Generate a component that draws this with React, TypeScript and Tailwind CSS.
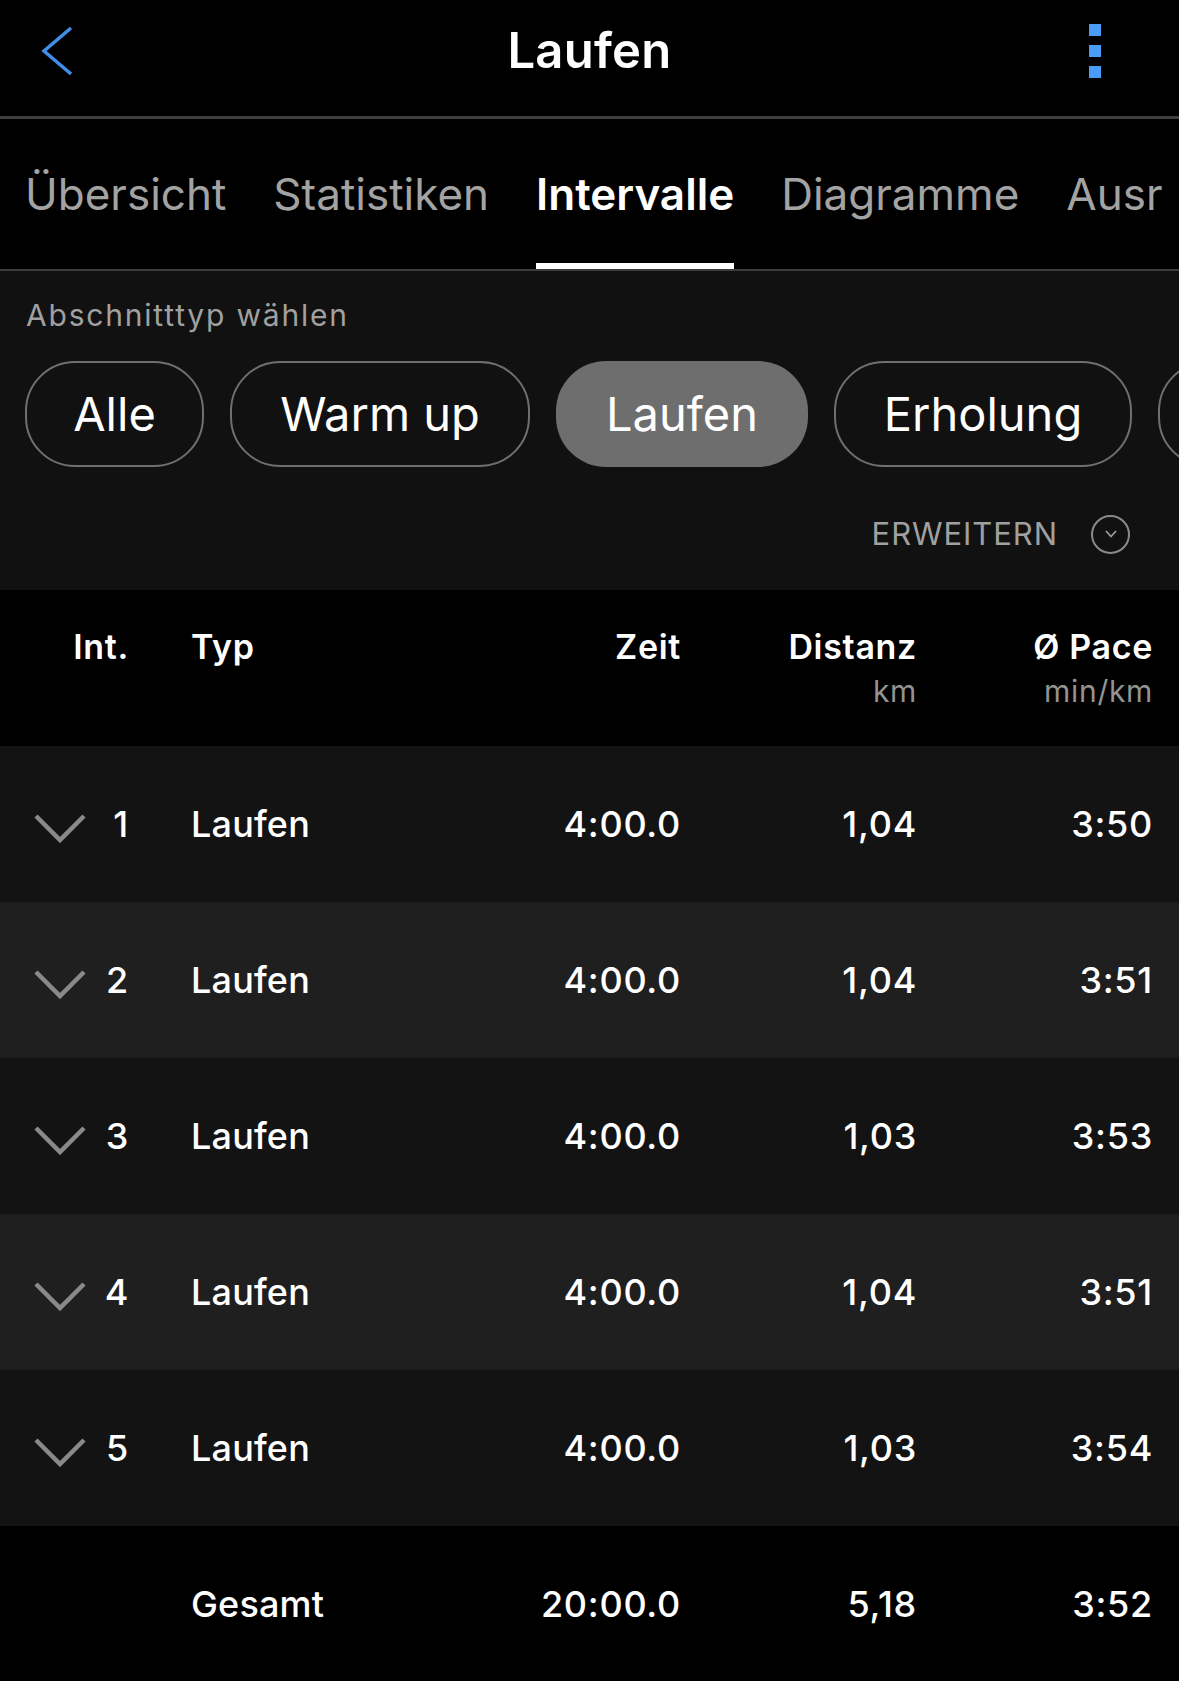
import React from 'react';

const tabs = [
  { label: 'Übersicht', active: false },
  { label: 'Statistiken', active: false },
  { label: 'Intervalle', active: true },
  { label: 'Diagramme', active: false },
  { label: 'Ausrüstung', active: false },
];

const chips = [
  { label: 'Alle', width: 'w-[179px]', active: false },
  { label: 'Warm up', width: 'w-[300px]', active: false },
  { label: 'Laufen', width: 'w-[252px]', active: true },
  { label: 'Erholung', width: 'w-[298px]', active: false },
  { label: 'Cool down', width: 'w-[290px]', active: false },
];

const laps = [
  { n: 1, type: 'Laufen', time: '4:00.0', dist: '1,04', pace: '3:50' },
  { n: 2, type: 'Laufen', time: '4:00.0', dist: '1,04', pace: '3:51' },
  { n: 3, type: 'Laufen', time: '4:00.0', dist: '1,03', pace: '3:53' },
  { n: 4, type: 'Laufen', time: '4:00.0', dist: '1,04', pace: '3:51' },
  { n: 5, type: 'Laufen', time: '4:00.0', dist: '1,03', pace: '3:54' },
];

function RowChevron() {
  return (
    <svg width="54" height="32" viewBox="0 0 54 32" fill="none">
      <path d="M3 4 L27 28 L51 4" stroke="#8a8a8a" strokeWidth="4.5" strokeLinecap="butt" strokeLinejoin="miter" />
    </svg>
  );
}

function TableRow({ lap, shade }: { lap: (typeof laps)[number]; shade: string }) {
  return (
    <div className={`flex h-[156px] items-center pr-[26px] text-[36px] font-medium tracking-[0.02em] text-white ${shade}`}>
      <div className="flex w-[129px] items-center justify-between pl-[33px]">
        <span className="mt-[8px]">
          <RowChevron />
        </span>
        <span>{lap.n}</span>
      </div>
      <div className="ml-[62px] flex-1 tracking-[0.005em]">{lap.type}</div>
      <div className="w-[200px] text-right">{lap.time}</div>
      <div className="w-[236px] text-right">{lap.dist}</div>
      <div className="w-[236px] text-right">{lap.pace}</div>
    </div>
  );
}

export default function App() {
  return (
    <div className="min-h-[1681px] w-[1179px] overflow-hidden bg-black font-[Inter,'Liberation_Sans',sans-serif] text-white">
      {/* top bar */}
      <div className="grid h-[119px] grid-cols-[1fr_auto_1fr] items-center border-b-[3px] border-[#3f3f3f] pb-[14px]">
        <div className="pl-[41px]">
          <svg width="34" height="50" viewBox="0 0 34 50" fill="none">
            <path d="M30 2 L3 25 L30 48" stroke="#3f8fea" strokeWidth="3.5" strokeLinejoin="miter" />
          </svg>
        </div>
        <div className="text-[49px] font-semibold tracking-[0.005em]">Laufen</div>
        <div className="flex justify-end pr-[78px]">
          <div className="flex flex-col gap-[9px]">
            <span className="h-[12px] w-[12px] bg-[#4a9df5]" />
            <span className="h-[12px] w-[12px] bg-[#4a9df5]" />
            <span className="h-[12px] w-[12px] bg-[#4a9df5]" />
          </div>
        </div>
      </div>

      {/* tabs */}
      <div className="border-b-2 border-[#3c3c3c]">
        <div className="mr-[14px] flex h-[150px] gap-[47px] overflow-hidden pl-[25px]">
          {tabs.map((t) => (
            <div key={t.label} className="relative flex shrink-0 items-center">
              <span
                className={
                  t.active
                    ? 'text-[44px] font-semibold text-white'
                    : 'text-[44px] font-normal text-[#a3a3a3]'
                }
              >
                {t.label}
              </span>
              {t.active && <span className="absolute bottom-0 left-0 right-0 h-[6px] bg-white" />}
            </div>
          ))}
        </div>
      </div>

      {/* filter section */}
      <div className="bg-[#111111] pb-[36px] pt-[26px]">
        <div className="pl-[26px] text-[30px] leading-[36px] tracking-[0.06em] text-[#a0a0a0]">
          Abschnitttyp wählen
        </div>
        <div className="mt-[28px] flex gap-[26px] overflow-hidden pl-[25px]">
          {chips.map((c) => (
            <div
              key={c.label}
              className={`flex h-[106px] shrink-0 items-center justify-center rounded-[50px] text-[47px] ${c.width} ${
                c.active ? 'bg-[#6e6e6e]' : 'border-2 border-[#6f6f6f]'
              }`}
            >
              {c.label}
            </div>
          ))}
        </div>
        <div className="mt-[47px] flex h-[40px] items-center justify-end gap-[33px] pr-[49px]">
          <span className="text-[31px] tracking-[0.03em] text-[#a0a0a0]">ERWEITERN</span>
          <span className="flex h-[39px] w-[39px] items-center justify-center rounded-full border-2 border-[#8a8a8a]">
            <svg width="14" height="10" viewBox="0 0 14 10" fill="none">
              <path d="M2 2 L7 7.5 L12 2" stroke="#9a9a9a" strokeWidth="1.8" />
            </svg>
          </span>
        </div>
      </div>

      {/* table header */}
      <div className="flex h-[156px] items-start pr-[26px] pt-[35px] text-[34px] font-semibold leading-[44px] tracking-[0.02em]">
        <div className="w-[129px] text-right">Int.</div>
        <div className="ml-[62px] flex-1">Typ</div>
        <div className="w-[200px] text-right">Zeit</div>
        <div className="flex w-[236px] flex-col items-end">
          <span>Distanz</span>
          <span className="text-[30px] font-normal text-[#939393]">km</span>
        </div>
        <div className="flex w-[236px] flex-col items-end">
          <span>Ø Pace</span>
          <span className="text-[30px] font-normal text-[#939393]">min/km</span>
        </div>
      </div>

      {/* rows */}
      {laps.map((lap, i) => (
        <TableRow key={lap.n} lap={lap} shade={i % 2 === 0 ? 'bg-[#131313]' : 'bg-[#1f1f1f]'} />
      ))}

      {/* total */}
      <div className="flex h-[156px] items-center pr-[26px] text-[36px] font-medium tracking-[0.02em]">
        <div className="w-[129px]" />
        <div className="ml-[62px] flex-1 tracking-[0.005em]">Gesamt</div>
        <div className="w-[200px] text-right">20:00.0</div>
        <div className="w-[236px] text-right">5,18</div>
        <div className="w-[236px] text-right">3:52</div>
      </div>
    </div>
  );
}
